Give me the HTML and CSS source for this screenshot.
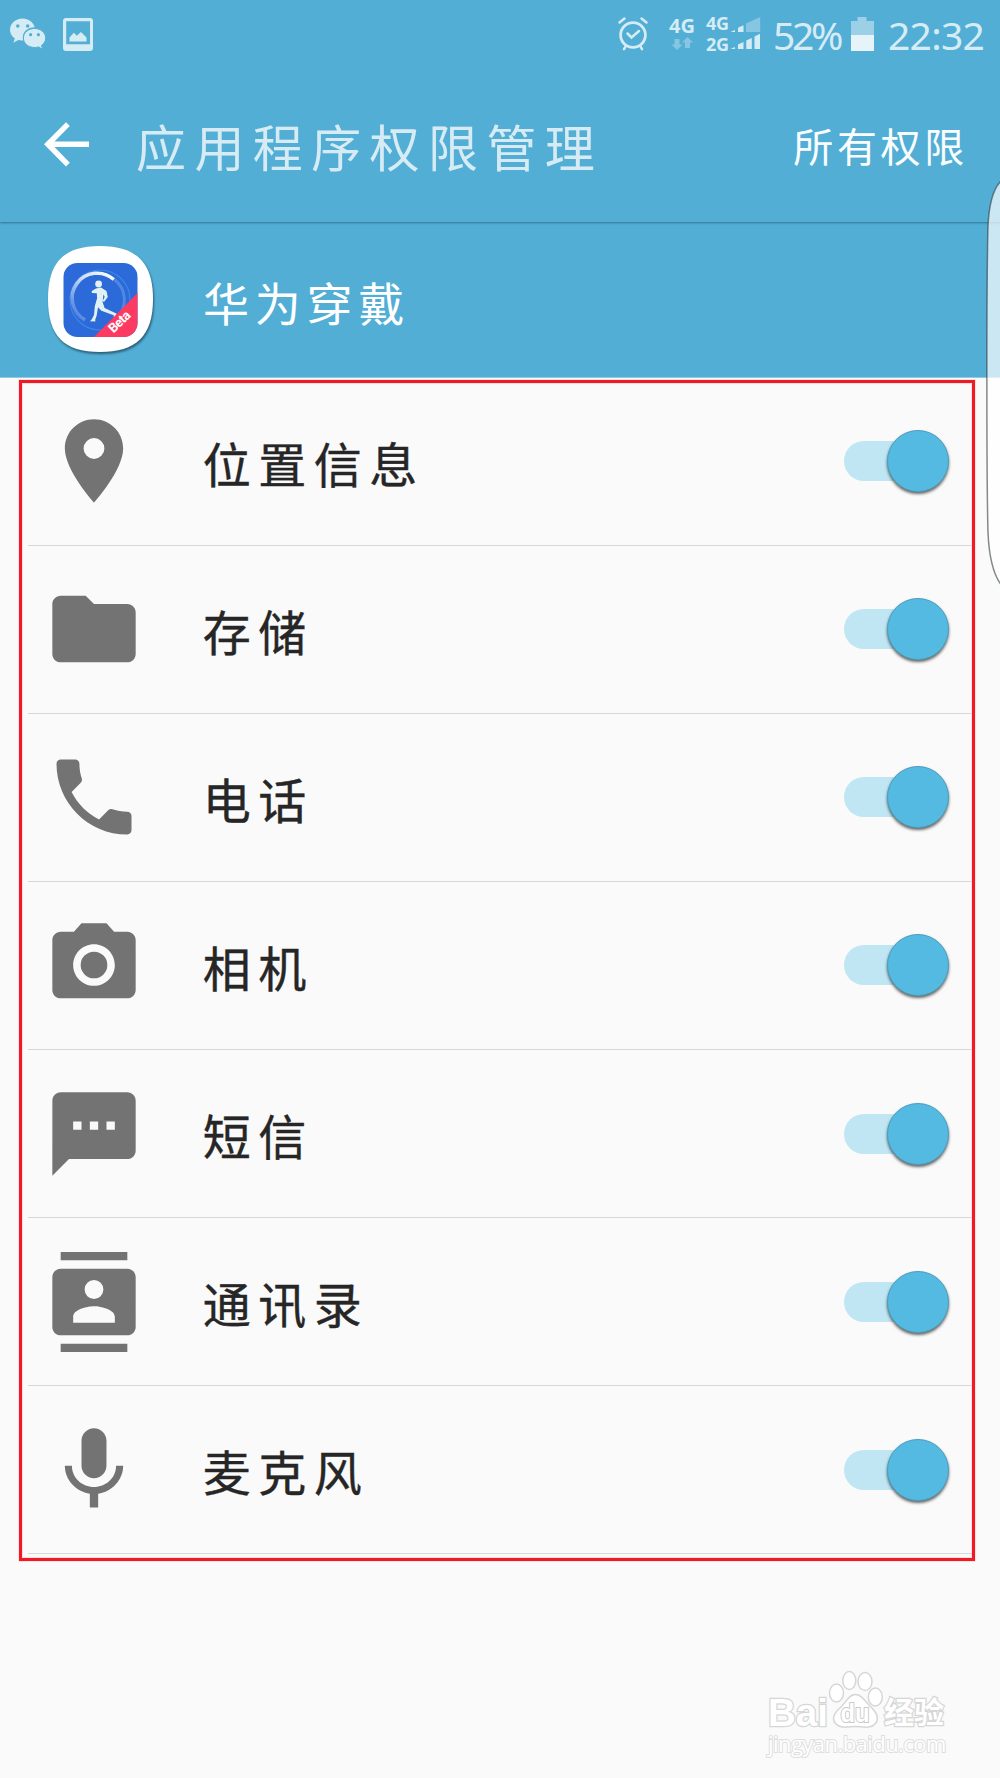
FILE: index.html
```html
<!DOCTYPE html>
<html lang="zh-CN">
<head>
<meta charset="utf-8">
<title>应用程序权限管理</title>
<link rel="stylesheet" href="styles.css">
</head>
<body>
<div class="screen">
  <header class="top">
    <div class="status">
      <div class="status-left">
        <svg class="wechat" viewBox="0 0 38 34" width="38" height="34">
          <path d="M13.500 1.500C6.500 1.500 1 6.500 1 12.700c0 3.600 1.900 6.800 4.800 8.800L4.300 25.800l5-2.700c1.800.4 3.300.6 5 .4C12 16 18 10.500 25.700 10.300 24.400 5.200 19.400 1.500 13.500 1.500z"/>
          <path d="M25.500 11.500c-6.200 0-11.100 4.200-11.100 9.500s4.900 9.500 11.100 9.500c1.400 0 2.700-.2 3.900-.6l4.200 2.300-1.100-3.700c2.600-1.800 4.200-4.500 4.200-7.500 0-5.300-5-9.500-11.200-9.500z"/>
          <g class="eye"><circle cx="8.800" cy="9" r="1.800"/><circle cx="18.700" cy="9" r="1.800"/><circle cx="21.600" cy="17.700" r="1.600"/><circle cx="29.400" cy="17.700" r="1.600"/></g>
        </svg>
        <svg class="picture" viewBox="0 0 30 33" width="30" height="33">
          <path fill-rule="evenodd" d="M3 0h24a3 3 0 0 1 3 3v27a3 3 0 0 1-3 3H3a3 3 0 0 1-3-3V3a3 3 0 0 1 3-3zM3.200 3.200v23h23.800v-23z"/>
          <path d="M6.500 23.500v-4l4.300-4.700 3 3L18 14l5.500 5.500v4z"/>
        </svg>
      </div>
      <div class="status-right">
        <svg class="alarm" viewBox="0 0 30 34" width="30" height="34">
          <g fill="none" stroke-linecap="round"><circle cx="15" cy="18" r="12.400" stroke-width="2.800"/><path stroke-width="2.500" d="M9.500 16.500l4 4L21 14M1.500 5.500L6.500 1.500M28.500 5.500L23.500 1.500M7.500 29.500l-1.500 2.700M22.500 29.500l1.500 2.700"/></g>
        </svg>
        <svg class="data" viewBox="0 0 28 34" width="28" height="34">
          <text x="0" y="15.500" font-size="20">4G</text>
          <path class="dim" d="M5.500 22h5v5.500h3L8 33 2.500 27.500h3zM16 31h5v-5.500h3L18.500 20 13 25.500h3z"/>
        </svg>
        <svg class="signal" viewBox="0 0 55 36" width="55" height="36">
          <text x="0" y="13.500" font-size="18" textLength="23">4G</text>
          <text x="0" y="34.500" font-size="18" textLength="23">2G</text>
          <path d="M24.500 16l4.500-2v2zM32 16v-4.200l5.500-2.600V16z"/>
          <path class="dim" d="M40 16V7.500L54.200 1V16z"/>
          <path d="M24.500 33l4.500-2v2zM32 33v-4.500l5.500-2.500v7zM40.300 33v-8.500l5.500-2.500v11zM48.500 33V20.500l5.500-2.800V33z"/>
        </svg>
        <span class="percent">52%</span>
        <svg class="battery" viewBox="0 0 23 34" width="23" height="34">
          <path class="mid" d="M0 4h6.500V0h9v4H23v14H0z"/><path class="full" d="M0 18h23v16H0z"/>
        </svg>
        <span class="clock">22:32</span>
      </div>
    </div>
    <div class="toolbar">
      <svg class="back" viewBox="0 0 45 45" width="45" height="45"><path d="M45 19.500H10.500L25.800 4 22 0.200 0 22.300 22 44.500l3.800-3.800L10.500 25H45z"/></svg>
      <h1>应用程序权限管理</h1>
      <a class="all">所有权限</a>
    </div>
  </header>
  <section class="app">
    <svg class="logo" viewBox="0 0 116 116" width="116" height="116">
      <defs>
        <clipPath id="tile"><rect x="18.500" y="18" width="74" height="74" rx="14"/></clipPath>
        <linearGradient id="sweep" x1="0" y1="1" x2="1" y2="0"><stop offset="0" stop-color="#fff" stop-opacity=".05"/><stop offset=".55" stop-color="#fff" stop-opacity=".75"/><stop offset="1" stop-color="#fff"/></linearGradient>
      </defs>
      <path class="plate" d="M55 1C91 1 108 17 108 54s-17 53-53 53S3 91 3 54 19 1 55 1z"/>
      <g clip-path="url(#tile)">
        <rect x="18" y="17" width="75" height="76" fill="#2c69d9"/>
        <circle cx="55" cy="55" r="30" fill="none" stroke="#3c86e8" stroke-width="1.200"/>
        <path d="M69.500 34.500A26 26 0 0 1 72 73" fill="none" stroke="#4f88e3" stroke-width="3"/>
        <path d="M40 75A25 25 0 1 1 68.800 34.500" fill="none" stroke="url(#sweep)" stroke-width="3.500"/>
        <g fill="#e1f0f3"><circle cx="53.600" cy="39" r="3.400"/><path d="M51 43.500l5-1 5.500 3.500 1.300 6-3.800 5-1.300-1.200 2-3.800-1.300-2.500-.8 7.500 2 6 6.900 3.300 5 2.200-.8 6.500-2-.4v-4.300l-12.300-4.500-3.400-3.500-1.300 8.200-1.500 4.300.2 1.700-5.400-.2 1.800-2 2.200-4.200.8-8.900 2.300-8-.3-5-5-.2v-2z"/></g>
        <path d="M93 47.500V93H48z" fill="#fd3b62"/>
        <text class="beta" transform="translate(68.500 88.500) rotate(-44)" font-size="13" textLength="25">Beta</text>
      </g>
    </svg>
    <span class="app-name">华为穿戴</span>
  </section>
  <main class="list">
    <div class="row"><svg class="icon" viewBox="0 0 24 24"><path d="M12 2C8.130 2 5 5.130 5 9c0 5.250 7 13 7 13s7-7.750 7-13c0-3.870-3.130-7-7-7zm0 9.500a2.500 2.500 0 0 1 0-5 2.500 2.500 0 0 1 0 5z"/></svg><span class="label">位置信息</span><span class="switch"><i></i></span></div>
    <div class="row"><svg class="icon" viewBox="0 0 24 24"><path d="M10 4H4c-1.100 0-2 .9-2 2v12c0 1.100.9 2 2 2h16c1.100 0 2-.9 2-2V8c0-1.100-.9-2-2-2h-8l-2-2z"/></svg><span class="label">存储</span><span class="switch"><i></i></span></div>
    <div class="row"><svg class="icon" viewBox="0 0 24 24"><path d="M6.620 10.790c1.440 2.830 3.760 5.140 6.590 6.590l2.200-2.200c.27-.27.670-.36 1.020-.24 1.120.37 2.330.57 3.570.57.550 0 1 .45 1 1V20c0 .550-.450 1-1 1-9.390 0-17-7.610-17-17 0-.55.450-1 1-1h3.500c.55 0 1 .45 1 1 0 1.250.2 2.450.57 3.570.11.350.03.740-.25 1.020l-2.200 2.200z"/></svg><span class="label">电话</span><span class="switch"><i></i></span></div>
    <div class="row"><svg class="icon" viewBox="0 0 24 24"><circle cx="12" cy="12" r="3.200"/><path d="M9 2L7.170 4H4c-1.100 0-2 .9-2 2v12c0 1.100.9 2 2 2h16c1.100 0 2-.9 2-2V6c0-1.100-.9-2-2-2h-3.170L15 2H9zm3 15c-2.760 0-5-2.240-5-5s2.240-5 5-5 5 2.240 5 5-2.240 5-5 5z"/></svg><span class="label">相机</span><span class="switch"><i></i></span></div>
    <div class="row"><svg class="icon" viewBox="0 0 24 24"><path d="M20 2H4c-1.100 0-1.990.9-1.990 2L2 22l4-4h14c1.100 0 2-.9 2-2V4c0-1.100-.9-2-2-2zM9 11H7V9h2v2zm4 0h-2V9h2v2zm4 0h-2V9h2v2z"/></svg><span class="label">短信</span><span class="switch"><i></i></span></div>
    <div class="row"><svg class="icon" viewBox="0 0 24 24"><path d="M20 0H4v2h16V0zM4 24h16v-2H4v2zM20 4H4c-1.100 0-2 .9-2 2v12c0 1.100.9 2 2 2h16c1.100 0 2-.9 2-2V6c0-1.100-.9-2-2-2zm-8 2.750a2.250 2.250 0 0 1 0 4.500 2.250 2.250 0 0 1 0-4.500zM17 17H7v-1.500c0-1.670 3.330-2.500 5-2.500s5 .830 5 2.500V17z"/></svg><span class="label">通讯录</span><span class="switch"><i></i></span></div>
    <div class="row"><svg class="icon" viewBox="0 0 24 24"><path d="M12 14c1.660 0 2.990-1.340 2.990-3L15 5c0-1.660-1.340-3-3-3S9 3.340 9 5v6c0 1.660 1.340 3 3 3zm5.300-3c0 3-2.540 5.100-5.300 5.100S6.700 14 6.700 11H5c0 3.410 2.720 6.230 6 6.720V21h2v-3.280c3.280-.48 6-3.300 6-6.720h-1.700z"/></svg><span class="label">麦克风</span><span class="switch"><i></i></span></div>
  </main>
  <div class="frame"></div>
  <svg class="edge" viewBox="0 0 14 406" width="14" height="406"><path d="M16 0C7 8 3 24 2 46 0.500 100 0.500 300 2 352 3 378 8 396 16 406"/></svg>
  <footer class="watermark">
    <svg class="brand" viewBox="0 0 190 64" width="190" height="64">
      <text class="latin" x="5" y="57.500" font-size="38" textLength="60" lengthAdjust="spacingAndGlyphs">Bai</text>
      <g class="paw"><ellipse cx="73.500" cy="25" rx="7" ry="9"/><ellipse cx="86.300" cy="12.500" rx="6.500" ry="9"/><ellipse cx="102" cy="13.500" rx="7" ry="9"/><ellipse cx="112.300" cy="29" rx="7" ry="9"/>
      <path d="M92.500 26.500c-7 0-9.500 8-15 13-7 6-9 11-5 16 5 6 14 3 20 3s15 3 20-3c4-5 2-10-4-16-6-5-9-13-16-13z"/></g>
      <text class="du" x="77.500" y="54" font-size="25" textLength="29" lengthAdjust="spacingAndGlyphs">du</text>
      <text class="cjk" x="121" y="55" font-size="30" textLength="60">经验</text>
    </svg>
    <div class="url">jingyan.baidu.com</div>
  </footer>
</div>
</body>
</html>
```
FILE: styles.css
```css
* { box-sizing: border-box; }
body { margin: 0; background: #fafafa; font-family: "Noto Sans CJK SC", sans-serif; }
.screen { position: relative; width: 1000px; height: 1778px; overflow: hidden; display: flex; flex-direction: column; }
svg { display: block; flex: none; }

.top { height: 222px; flex: none; background: #52aed5; box-shadow: 0 1px 2px rgba(20, 70, 100, .55); position: relative; }
.status { height: 68px; display: flex; justify-content: space-between; color: #d6ecf5; fill: #d6ecf5; }
.status svg { overflow: visible; }
.status-left, .status-right { display: flex; align-items: flex-start; }
.status-left { padding: 17px 0 0 9px; gap: 16px; }
.wechat .eye { fill: #52aed5; }
.wechat path + path { stroke: #52aed5; stroke-width: 1; }
.picture { margin-top: 1px; }
.status-right { padding: 17px 14px 0 0; }
.alarm { stroke: #d6ecf5; margin-right: 21px; }
.data { margin-right: 9px; }
.signal { margin-top: -1px; margin-right: 12px; }
.status text { font-family: "Open Sans", sans-serif; font-weight: 700; }
.dim { opacity: .4; }
.mid { fill: #9bd0e6; }
.full { fill: #e6f4f9; }
.percent, .clock { font: 400 39px/48px "Noto Sans", sans-serif; height: 48px; margin-top: -6px; white-space: nowrap; }
.percent { width: 69px; letter-spacing: -3.300px; }
.battery { margin: 0 14px 0 9px; }
.clock { width: 98px; letter-spacing: -.7px; }

.toolbar { height: 154px; display: flex; align-items: center; padding: 0 32px 0 44px; color: #fafdfe; }
.back { fill: #fff; margin-top: -1px; }
h1 { margin: 0 0 0 47px; font-size: 50px; line-height: 70px; font-weight: 400; letter-spacing: 8.400px; color: #d6ebf4; white-space: nowrap; flex: 1; }
.all { font-size: 40px; line-height: 60px; letter-spacing: 3.700px; margin-top: -1px; white-space: nowrap; }

.app { height: 156px; flex: none; background: #52aed5; display: flex; align-items: center; padding-left: 45px; border-bottom: 1px solid #8fcae3; }
.logo { margin-top: 7px; }
.plate { fill: #fff; filter: drop-shadow(1px 2px 1px rgba(20, 50, 70, .65)); }
.beta { fill: #fff; font-family: Roboto, sans-serif; font-weight: 700; }
.app-name { margin: 3px 0 0 42px; font-size: 46px; line-height: 64px; letter-spacing: 5.800px; color: #fff; }

.list { width: 972px; padding-left: 28px; flex: none; margin-top: -.4px; }
.row { height: 168.100px; display: flex; align-items: center; padding: 0 23px 0 16.400px; border-bottom: 1px solid #d8d8d8; }
.icon { width: 100px; height: 100px; fill: #737373; }
.label { margin: 1px 0 0 58.400px; flex: 1; font-size: 48px; line-height: 68px; letter-spacing: 7.500px; color: #262626; -webkit-text-stroke: .4px #262626; }
.switch { width: 105px; height: 40px; border-radius: 20px; background: linear-gradient(90deg, #c0e6f3 80px, transparent 80px); display: flex; align-items: center; justify-content: flex-end; }
.switch i { width: 62px; height: 62px; flex: none; border-radius: 50%; background: #54bae1; border: 1px solid #4c9fc0; box-shadow: 0 2px 3px rgba(0, 0, 0, .6); }

.frame { position: absolute; left: 19px; top: 380px; width: 956px; height: 1181px; border: 3px solid #ed1c24; box-shadow: 0 0 0 1px rgba(255, 190, 200, .4), inset 0 0 0 1px rgba(255, 190, 200, .5); }
.edge { position: absolute; right: 0; top: 180px; fill: rgba(255, 255, 255, .7); stroke: rgba(50, 60, 65, .6); stroke-width: 1.500; }

.watermark { position: absolute; left: 763px; top: 1668px; width: 190px; }
.brand { fill: #fff; stroke: #d6d6d6; stroke-width: 2.500; paint-order: stroke; overflow: visible; }
.paw { paint-order: normal; stroke-width: 1.500; }
.latin, .du { font-family: "Liberation Sans", sans-serif; font-weight: 700; }
.du { stroke-width: 2; stroke: #cacaca; }
.cjk { font-weight: 700; }
.url { font: 400 22px/26px "Open Sans", sans-serif; color: #fff; letter-spacing: -.55px; margin: -2px 0 0 5px; -webkit-text-stroke: 2px #dedede; paint-order: stroke fill; }
```
